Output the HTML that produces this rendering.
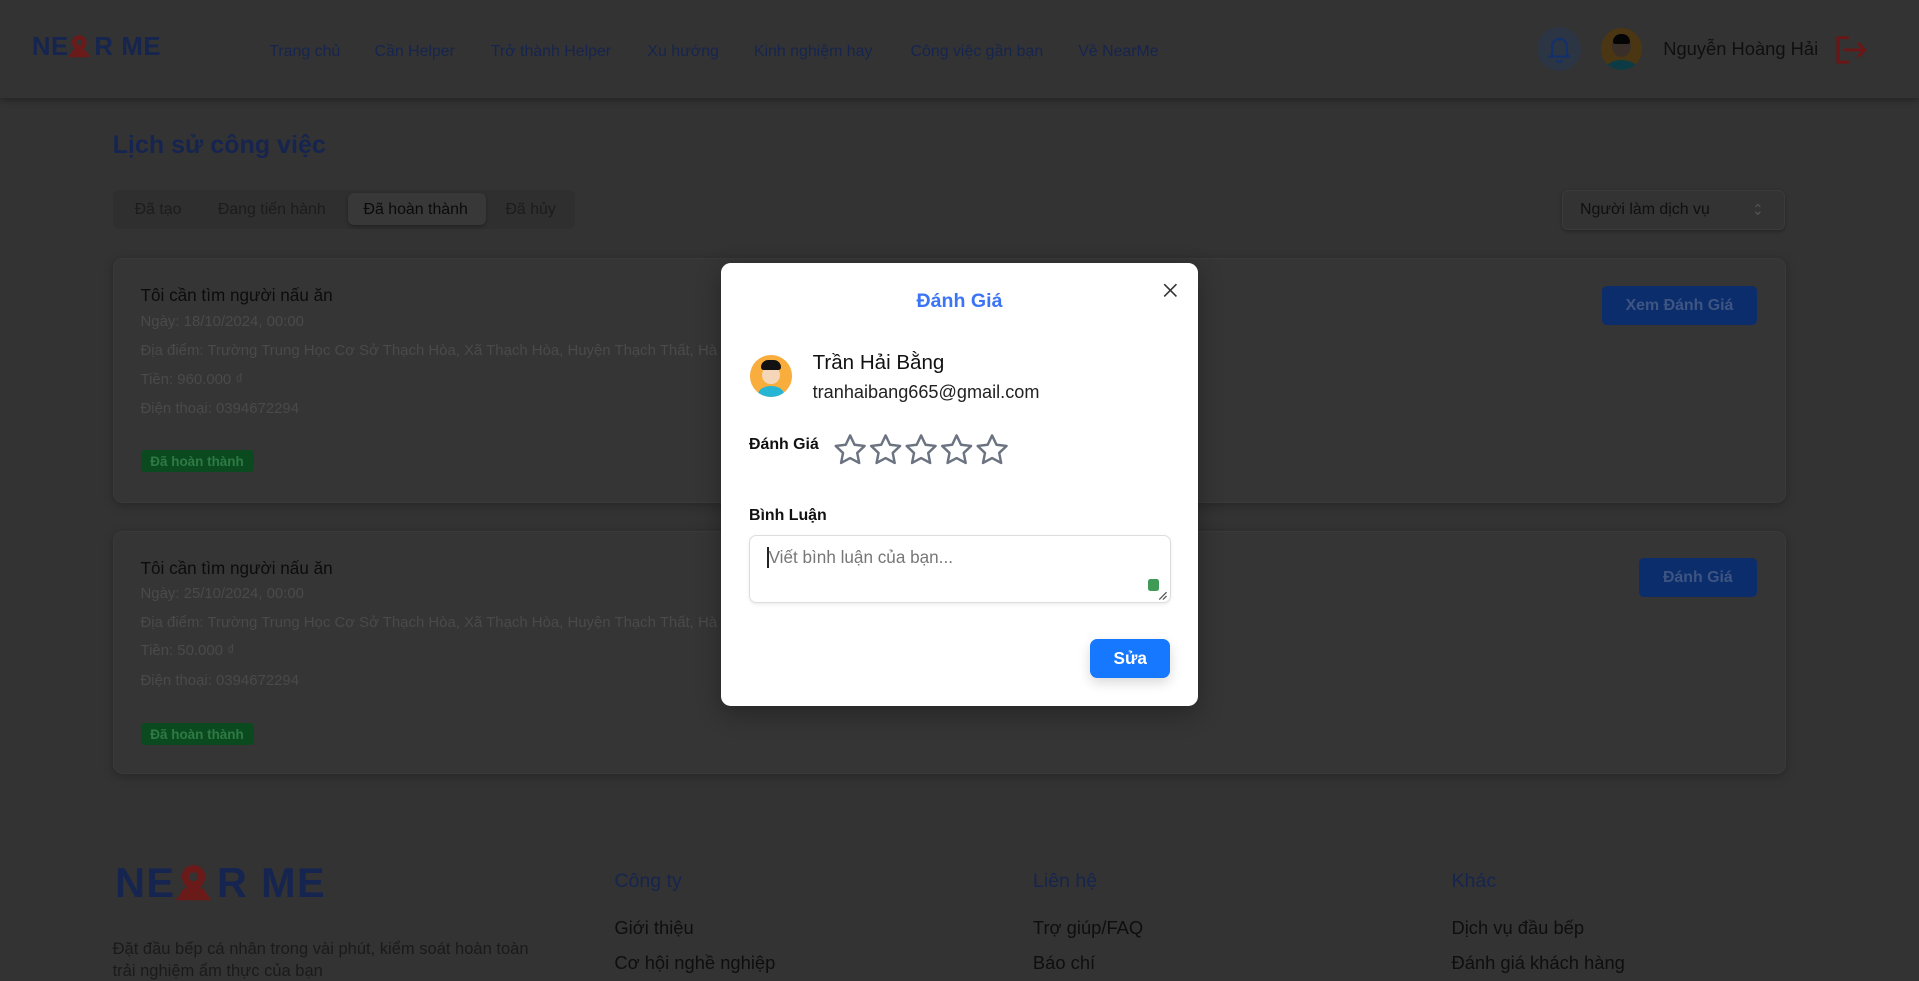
<!DOCTYPE html>
<html><head><meta charset="utf-8"><style>
html,body{margin:0;padding:0;}
body{width:1568px;height:793px;overflow:hidden;background:#333;font-family:"Liberation Sans","Noto Sans CJK SC",sans-serif;zoom:1.22385;position:relative;}
.a{position:absolute;white-space:nowrap;}
.hdr{position:absolute;left:0;top:0;width:1568px;height:80px;background:#333;box-shadow:0 2px 6px rgba(0,0,0,.35);}
.nav{font-size:13px;color:#16254f;top:35px;}
.card{position:absolute;left:92px;width:1366px;background:#353535;border:1px solid #3a3a3a;border-radius:8px;box-shadow:0 2px 8px rgba(0,0,0,.25);}
.ct{font-size:14px;color:#0c0c0c;}
.cl{font-size:12.2px;color:#4a4a4a;}
.badge{position:absolute;left:22px;background:#0b4a1e;color:#2e7a45;font-size:11px;font-weight:bold;padding:3px 8px;border-radius:3px;}
.btn{position:absolute;background:#0c2d6b;color:#3e5583;font-size:13px;font-weight:bold;text-align:center;border-radius:4px;}
.fh{font-size:16px;color:#16254f;}
.fi{font-size:15px;color:#0e0e0e;}
.tab{font-size:13px;color:#1c1c1c;top:164px;}
</style></head><body>
<div class="hdr"></div>
<div class="a" style="left:26px;top:27px;font-size:21px;font-weight:bold;color:#16254f;letter-spacing:0.5px">NE<span style="display:inline-block;width:21px"></span>R ME</div>
<svg class="a" style="left:55px;top:28px" width="20" height="20" viewBox="0 0 20 20"><path d="M10 1a6 6 0 0 0-6 6c0 4 6 9 6 9s6-5 6-9a6 6 0 0 0-6-6z" fill="#6b1a1a"/><circle cx="10" cy="7" r="2.3" fill="#333"/><path d="M1 19l4-6h10l4 6z" fill="#6b1a1a"/></svg>
<div class="a nav" style="left:220px">Trang chủ</div>
<div class="a nav" style="left:306px">Cần Helper</div>
<div class="a nav" style="left:401px">Trở thành Helper</div>
<div class="a nav" style="left:529px">Xu hướng</div>
<div class="a nav" style="left:616px">Kinh nghiệm hay</div>
<div class="a nav" style="left:744px">Công việc gần bạn</div>
<div class="a nav" style="left:881px">Về NearMe</div>
<div class="a" style="left:1256px;top:22px;width:36px;height:36px;border-radius:50%;background:#2c3544"></div>
<svg class="a" style="left:1263px;top:28px" width="22" height="24" viewBox="0 0 22 24" fill="none" stroke="#13306b" stroke-width="1.8" stroke-linejoin="round"><path d="M5 17V10a6 6 0 0 1 12 0v7l2 1.5H3z"/><path d="M9 21a2 2 0 0 0 4 0"/></svg>
<div class="a" style="left:1308px;top:23px;width:34px;height:34px;border-radius:50%;background:#4a3612;overflow:hidden"><div style="position:absolute;left:9px;top:6px;width:16px;height:18px;border-radius:50%;background:#3a2f28"></div><div style="position:absolute;left:10px;top:5px;width:14px;height:8px;border-radius:7px 7px 2px 2px;background:#050505"></div><div style="position:absolute;left:4px;top:26px;width:26px;height:14px;border-radius:50%;background:#0d3b45"></div></div>
<div class="a" style="left:1359px;top:31px;font-size:15px;color:#0f0f0f">Nguyễn Hoàng Hải</div>
<svg class="a" style="left:1498px;top:28px" width="28" height="26" viewBox="0 0 28 26" fill="none" stroke="#6b1616" stroke-width="2.4" stroke-linecap="round" stroke-linejoin="round"><path d="M12 3H4v20h8"/><path d="M10 13h16M21 8l5 5-5 5"/></svg>

<div class="a" style="left:92px;top:107px;font-size:20.5px;font-weight:bold;color:#16254f">Lịch sử công việc</div>
<div class="a" style="left:92px;top:155px;width:378px;height:32px;background:#2f2f2f;border-radius:6px"></div>
<div class="a" style="left:284px;top:158px;width:113px;height:26px;background:#383838;border-radius:5px;box-shadow:0 1px 3px rgba(0,0,0,.3)"></div>
<div class="a tab" style="left:110px">Đã tạo</div>
<div class="a tab" style="left:178px">Đang tiến hành</div>
<div class="a tab" style="left:297px;color:#0a0a0a">Đã hoàn thành</div>
<div class="a tab" style="left:413px">Đã hủy</div>
<div class="a" style="left:1276px;top:155px;width:181px;height:31px;background:#333;border:1px solid #3b3b3b;border-radius:5px;box-shadow:0 1px 3px rgba(0,0,0,.3)"></div>
<div class="a" style="left:1291px;top:164px;font-size:13px;color:#0f0f0f">Người làm dịch vụ</div>
<svg class="a" style="left:1432px;top:165px" width="8" height="12" viewBox="0 0 8 12" fill="none" stroke="#555" stroke-width="1"><path d="M2 4l2-2 2 2M2 8l2 2 2-2"/></svg>

<div class="card" style="top:211px;height:198px">
<div class="a ct" style="left:22px;top:21px">Tôi cần tìm người nấu ăn</div>
<div class="a cl" style="left:22px;top:44px">Ngày: 18/10/2024, 00:00</div>
<div class="a cl" style="left:22px;top:68px">Địa điểm: Trường Trung Học Cơ Sở Thạch Hòa, Xã Thạch Hòa, Huyện Thạch Thất, Hà</div>
<div class="a cl" style="left:22px;top:91px">Tiền: 960.000 ₫</div>
<div class="a cl" style="left:22px;top:115px">Điện thoại: 0394672294</div>
<div class="badge" style="top:156px">Đã hoàn thành</div>
<div class="btn" style="left:1216px;top:22px;width:127px;height:32px;line-height:32px">Xem Đánh Giá</div>
</div>
<div class="card" style="top:434px;height:197px">
<div class="a ct" style="left:22px;top:21px">Tôi cần tìm người nấu ăn</div>
<div class="a cl" style="left:22px;top:43px">Ngày: 25/10/2024, 00:00</div>
<div class="a cl" style="left:22px;top:67px">Địa điểm: Trường Trung Học Cơ Sở Thạch Hòa, Xã Thạch Hòa, Huyện Thạch Thất, Hà</div>
<div class="a cl" style="left:22px;top:90px">Tiền: 50.000 ₫</div>
<div class="a cl" style="left:22px;top:114px">Điện thoại: 0394672294</div>
<div class="badge" style="top:156px">Đã hoàn thành</div>
<div class="btn" style="left:1246px;top:21px;width:97px;height:32px;line-height:32px">Đánh Giá</div>
</div>

<div class="a" style="left:94px;top:702px;font-size:34px;font-weight:bold;color:#16254f;letter-spacing:1px">NE<span style="display:inline-block;width:34px"></span>R ME</div>
<svg class="a" style="left:142px;top:705px" width="32" height="32" viewBox="0 0 20 20"><path d="M10 1a6 6 0 0 0-6 6c0 4 6 9 6 9s6-5 6-9a6 6 0 0 0-6-6z" fill="#6b1a1a"/><circle cx="10" cy="7" r="2.3" fill="#333"/><path d="M1 19l4-6h10l4 6z" fill="#6b1a1a"/></svg>
<div class="a" style="left:92px;top:767px;font-size:13.5px;color:#1a1a1a">Đặt đầu bếp cá nhân trong vài phút, kiểm soát hoàn toàn</div>
<div class="a" style="left:92px;top:785px;font-size:13.5px;color:#1a1a1a">trải nghiệm ẩm thực của bạn</div>
<div class="a fh" style="left:502px;top:711px">Công ty</div>
<div class="a fi" style="left:502px;top:749px">Giới thiệu</div>
<div class="a fi" style="left:502px;top:778px">Cơ hội nghề nghiệp</div>
<div class="a fh" style="left:844px;top:711px">Liên hệ</div>
<div class="a fi" style="left:844px;top:749px">Trợ giúp/FAQ</div>
<div class="a fi" style="left:844px;top:778px">Báo chí</div>
<div class="a fh" style="left:1186px;top:711px">Khác</div>
<div class="a fi" style="left:1186px;top:749px">Dịch vụ đầu bếp</div>
<div class="a fi" style="left:1186px;top:778px">Đánh giá khách hàng</div>

<!-- modal -->
<div class="a" style="left:589px;top:215px;width:390px;height:362px;background:#fff;border-radius:8px;box-shadow:0 6px 20px rgba(0,0,0,.3)"></div>
<div class="a" style="left:589px;top:237px;width:390px;text-align:center;font-size:16px;font-weight:bold;color:#3b74f6">Đánh Giá</div>
<svg class="a" style="left:950px;top:231px" width="12" height="12" viewBox="0 0 12 12" stroke="#333" stroke-width="1.3"><path d="M1 1l10 10M11 1L1 11"/></svg>
<div class="a" style="left:613px;top:290px;width:34px;height:34px;border-radius:50%;background:#f9ad3c;overflow:hidden">
<div style="position:absolute;left:10px;top:9px;width:14px;height:15px;border-radius:50%;background:#f6d6b8"></div>
<div style="position:absolute;left:9px;top:4px;width:16px;height:8px;border-radius:8px 8px 3px 3px;background:#111"></div>
<div style="position:absolute;left:6px;top:25px;width:22px;height:14px;border-radius:50% 50% 0 0;background:#27b5d6"></div></div>
<div class="a" style="left:664px;top:287px;font-size:16.8px;color:#111;font-weight:500">Trần Hải Bằng</div>
<div class="a" style="left:664px;top:312px;font-size:14.8px;color:#222">tranhaibang665@gmail.com</div>
<div class="a" style="left:612px;top:356px;font-size:13px;font-weight:bold;color:#111">Đánh Giá</div>
<svg class="a" style="left:681px;top:354px" width="148" height="28" viewBox="0 0 148 28" fill="none" stroke="#6b7280" stroke-width="2" stroke-linejoin="round">
<g id="s"><path d="M14 2l3.6 7.6 8.2 1-6 5.7 1.6 8.2L14 20.5l-7.4 4 1.6-8.2-6-5.7 8.2-1z"/></g>
<use href="#s" x="29"/><use href="#s" x="58"/><use href="#s" x="87"/><use href="#s" x="116"/></svg>
<div class="a" style="left:612px;top:414px;font-size:13px;font-weight:bold;color:#111">Bình Luận</div>
<div class="a" style="left:612px;top:437px;width:343px;height:54px;border:1px solid #ddd;border-radius:6px;box-shadow:0 1px 3px rgba(0,0,0,.08)"></div>
<div class="a" style="left:627px;top:447px;width:1px;height:17px;background:#222"></div>
<div class="a" style="left:628px;top:447px;font-size:14px;color:#777">Viết bình luận của bạn...</div>
<div class="a" style="left:938px;top:473px;width:9px;height:10px;background:#3e9a55;border-radius:2px"></div>
<svg class="a" style="left:946px;top:483px" width="8" height="8" stroke="#555" stroke-width="1"><path d="M1 7L7 1M4 7L7 4"/></svg>
<div class="a" style="left:891px;top:522px;width:65px;height:32px;line-height:32px;text-align:center;background:#1677ff;color:#fff;font-size:14px;font-weight:bold;border-radius:6px;box-shadow:0 4px 10px rgba(0,0,0,.15)">Sửa</div>
</body></html>
